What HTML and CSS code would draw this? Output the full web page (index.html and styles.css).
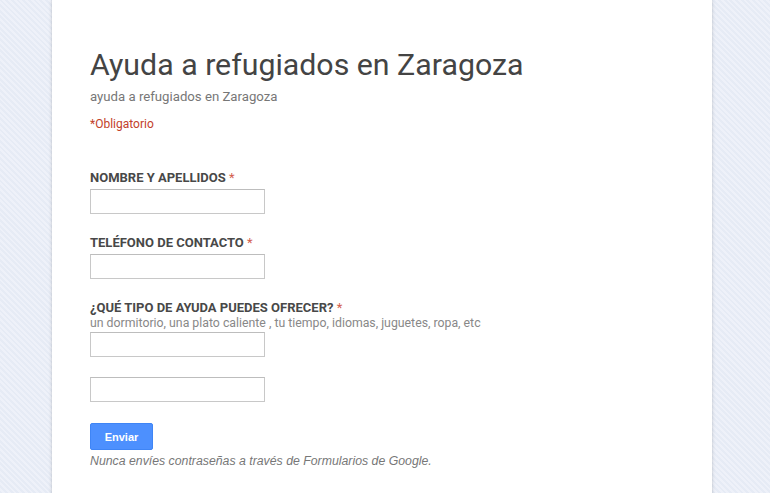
FILE: index.html
```html
<!DOCTYPE html>
<html lang="es">
<head>
    <meta charset="UTF-8">
    <meta name="viewport" content="width=device-width, initial-scale=1.0">
    <title>Ayuda a refugiados en Zaragoza</title>
    <link rel="stylesheet" href="styles.css">
</head>
<body>
    <div class="form-card">
        <h1 class="form-title">Ayuda a refugiados en Zaragoza</h1>
        <div class="form-desc">ayuda a refugiados en Zaragoza</div>
        <div class="required-note">*Obligatorio</div>

        <div class="item first">
            <label class="item-label" for="nombre">NOMBRE Y APELLIDOS <span class="star">*</span></label>
            <input type="text" id="nombre" class="text-input">
        </div>

        <div class="item">
            <label class="item-label" for="telefono">TELÉFONO DE CONTACTO <span class="star">*</span></label>
            <input type="text" id="telefono" class="text-input">
        </div>

        <div class="item">
            <label class="item-label" for="ayuda">¿QUÉ TIPO DE AYUDA PUEDES OFRECER? <span class="star">*</span></label>
            <div class="item-help">un dormitorio, una plato caliente , tu tiempo, idiomas, juguetes, ropa, etc</div>
            <input type="text" id="ayuda" class="text-input">
        </div>

        <div class="item extra">
            <input type="text" class="text-input">
        </div>

        <button class="submit-btn">Enviar</button>
        <div class="footer-note">Nunca envíes contraseñas a través de Formularios de Google.</div>
    </div>
</body>
</html>
```

FILE: styles.css
```css
html, body { margin: 0; padding: 0; height: 100%; }
body {
    font-family: Roboto, "Liberation Sans", Arial, sans-serif;
    background: repeating-linear-gradient(45deg, #e6ebf5 0 2px, #eef1f9 2px 4px);
    overflow: hidden;
}
.form-card {
    width: 660px; margin-left: 52px; min-height: 600px; box-sizing: border-box;
    background: #fff; padding: 47px 38px 40px;
    box-shadow: 0 0 4px rgba(0,0,0,0.16), 0 0 1px rgba(0,0,0,0.12);
}
.form-title { margin: 0; font-size: 30.3px; line-height: 36px; font-weight: 400; color: #444; }
.form-desc { margin-top: 5px; font-size: 13.2px; line-height: 18px; color: #777; }
.required-note { margin-top: 10px; font-size: 12px; line-height: 16px; color: #c2412a; }
.item { margin-top: 21px; }
.item.first { margin-top: 38px; }
.item.extra { margin-top: 20px; }
.item-label { display: block; font-size: 13px; line-height: 16px; font-weight: 700; color: #484848; }
.star { color: #d3604e; font-weight: 400; }
.item-help { margin-top: 0; font-size: 12.3px; line-height: 14px; color: #888; }
.text-input {
    display: block; margin: 3px 0 0; width: 175px; height: 25px; box-sizing: border-box;
    border: 1px solid #c8c8c8; border-top-color: #bdbdbd; padding: 2px 4px; font-size: 13px;
}
.item-help + .text-input { margin-top: 2px; }
.item.extra .text-input { margin-top: 0; }
.submit-btn {
    display: block; margin-top: 21px; width: 63px; height: 27px; padding: 0;
    background: #4d90fe; border: 1px solid #3f85f5; border-radius: 2px;
    color: #fff; font-family: "Liberation Sans", Arial, sans-serif; font-size: 11px; font-weight: 700;
}
.footer-note {
    margin-top: 4px; font-family: "Liberation Sans", Arial, sans-serif; font-size: 12.3px;
    line-height: 14px; font-style: italic; color: #777;
}
```
